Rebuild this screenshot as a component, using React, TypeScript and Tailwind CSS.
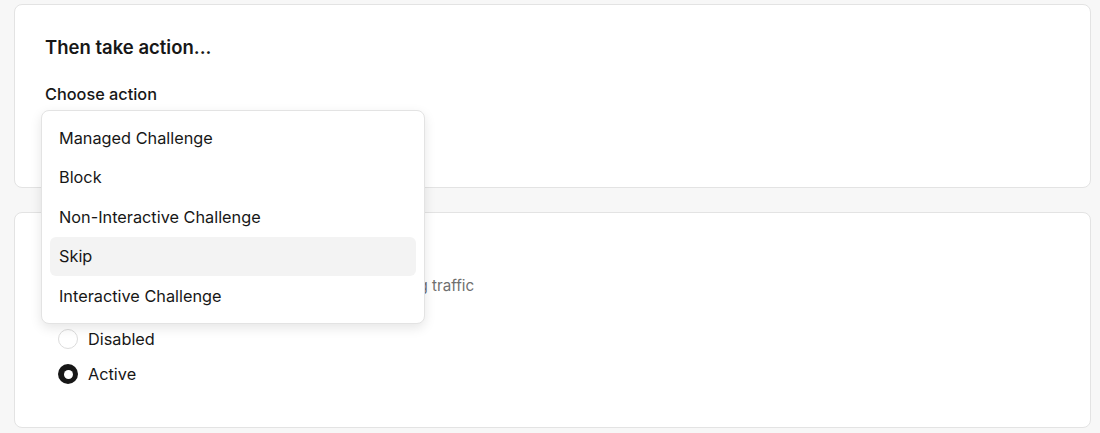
import React from "react";

const items = [
  "Managed Challenge",
  "Block",
  "Non-Interactive Challenge",
  "Skip",
  "Interactive Challenge",
];

export default function App() {
  return (
    <div
      className="relative h-[433px] w-[1100px] overflow-hidden bg-[#f7f7f7] pl-[14px] pr-[9px] pt-[4px] text-[#171717]"
      style={{ fontFamily: "Inter, 'Noto Sans', sans-serif" }}
    >
      <div className="flex h-[184px] flex-col rounded-lg border border-[#e3e3e3] bg-white px-[30px] pt-[28px]">
        <h2 className="text-[18.5px] font-semibold leading-[28px]">Then take action...</h2>
        <div className="mt-[21px] text-[16.3px] font-medium leading-[24px]">Choose action</div>
        <div className="mt-[8px] flex h-[40px] w-[380px] items-center rounded-md border border-[#e3e3e3] px-3 text-[16px]">
          Skip
        </div>
      </div>

      <div className="mt-[24px] flex h-[216px] flex-col rounded-lg border border-[#e3e3e3] bg-white px-[30px] pt-[28px]">
        <h2 className="text-[18.5px] font-semibold leading-[28px]">Rule status</h2>
        <p className="mt-[5px] text-[15.15px] leading-[24px] text-[#6f6f6f]">
          Choose whether this rule should apply to all incoming traffic
        </p>
        <div className="ml-[13px] mt-[29px] flex flex-col gap-[11px]">
          <label className="flex h-[24px] items-center gap-[10px] text-[16.3px]">
            <span className="h-5 w-5 rounded-full border border-[#dcdcdc] bg-white" />
            Disabled
          </label>
          <label className="flex h-[24px] items-center gap-[10px] text-[16.3px]">
            <span className="flex h-5 w-5 items-center justify-center rounded-full bg-[#171717]">
              <span className="h-[9px] w-[9px] rounded-full bg-white" />
            </span>
            Active
          </label>
        </div>
      </div>

      <div className="absolute left-[41px] top-[110px] w-[384px] rounded-lg border border-[#e3e3e3] bg-white px-2 py-[7px] shadow-[0_4px_12px_rgba(0,0,0,0.1)]">
        {items.map((it) => (
          <div
            key={it}
            className={`flex h-[39.5px] items-center rounded-md px-[9px] text-[16.3px] leading-[24px] ${
              it === "Skip" ? "bg-[#f3f3f3]" : ""
            }`}
          >
            {it}
          </div>
        ))}
      </div>
    </div>
  );
}
